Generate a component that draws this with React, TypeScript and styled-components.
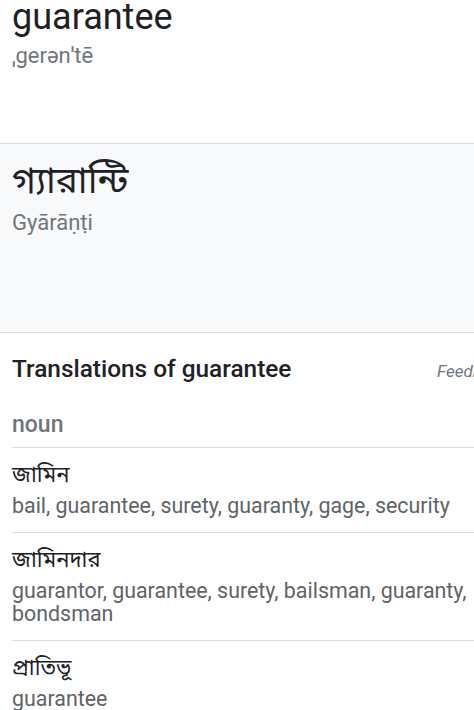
import React from "react";
import styled, { createGlobalStyle } from "styled-components";

const GlobalStyle = createGlobalStyle`
    html, body {
        margin: 0;
        padding: 0;
        background: #ffffff;
        overflow: hidden;
    }
    body {
        font-family: Roboto, "Noto Sans Bengali", "Noto Sans", "DejaVu Sans", sans-serif;
        color: #202124;
    }
`;

const Page = styled.main`
    width: 474px;
    height: 710px;
    overflow: hidden;
    display: flex;
    flex-direction: column;

    & > * {
        flex-shrink: 0;
    }
`;

const SourceBlock = styled.section`
    height: 144px;
    padding: 0 12px;
    box-sizing: border-box;
    border-bottom: 1px solid #dadce0;
`;

const TargetBlock = styled.section`
    height: 189px;
    padding: 17px 12px 0;
    box-sizing: border-box;
    background: #f8f9fa;
    border-bottom: 1px solid #dadce0;
`;

const Word = styled.div<{ $script?: "latin" | "bengali" }>`
    font-size: ${(p) => (p.$script === "bengali" ? "37px" : "36px")};
    line-height: ${(p) => (p.$script === "bengali" ? "40px" : "34px")};
    color: #202124;
    white-space: nowrap;
`;

const Phonetic = styled.div`
    font-size: 22px;
    line-height: 30px;
    color: #70757a;
    margin-top: 7px;
`;

const Translations = styled.section`
    padding: 0 0 0 12px;
`;

const TitleRow = styled.div`
    display: flex;
    align-items: baseline;
    justify-content: space-between;
    width: calc(100% + 46px);
    padding-top: 20px;
`;

const Title = styled.h2`
    margin: 0;
    font-size: 24.4px;
    line-height: 32px;
    font-weight: 500;
    color: #202124;
`;

const Feedback = styled.span`
    font-size: 17px;
    font-style: italic;
    color: #70757a;
    padding-right: 12px;
`;

const PartOfSpeech = styled.div`
    margin-top: 26px;
    padding-bottom: 8px;
    font-size: 23px;
    line-height: 28px;
    font-weight: 500;
    color: #70757a;
    border-bottom: 1px solid #dadce0;
`;

const Entry = styled.div`
    padding: 12px 0 15px 0;
    border-bottom: 1px solid #dadce0;

    &:last-child {
        border-bottom: none;
    }
`;

const EntryWord = styled.div`
    font-size: 22px;
    line-height: 30px;
    color: #202124;
`;

const Synonyms = styled.div`
    font-size: 21.4px;
    line-height: 23px;
    color: #5f6368;
    margin-top: 4px;
    padding-right: 4px;
`;

const entries = [
    { word: "জামিন", synonyms: "bail, guarantee, surety, guaranty, gage, security" },
    { word: "জামিনদার", synonyms: "guarantor, guarantee, surety, bailsman, guaranty, bondsman" },
    { word: "প্রাতিভূ", synonyms: "guarantee" },
];

export default function App(): JSX.Element {
    return (
        <>
            <GlobalStyle />
            <Page>
                <SourceBlock>
                    <Word>guarantee</Word>
                    <Phonetic>ˌgerənˈtē</Phonetic>
                </SourceBlock>
                <TargetBlock>
                    <Word $script="bengali">গ্যারান্টি</Word>
                    <Phonetic>Gyārāṇṭi</Phonetic>
                </TargetBlock>
                <Translations>
                    <TitleRow>
                        <Title>Translations of guarantee</Title>
                        <Feedback>Feedback</Feedback>
                    </TitleRow>
                    <PartOfSpeech>noun</PartOfSpeech>
                    {entries.map((e) => (
                        <Entry key={e.word}>
                            <EntryWord>{e.word}</EntryWord>
                            <Synonyms>{e.synonyms}</Synonyms>
                        </Entry>
                    ))}
                </Translations>
            </Page>
        </>
    );
}
